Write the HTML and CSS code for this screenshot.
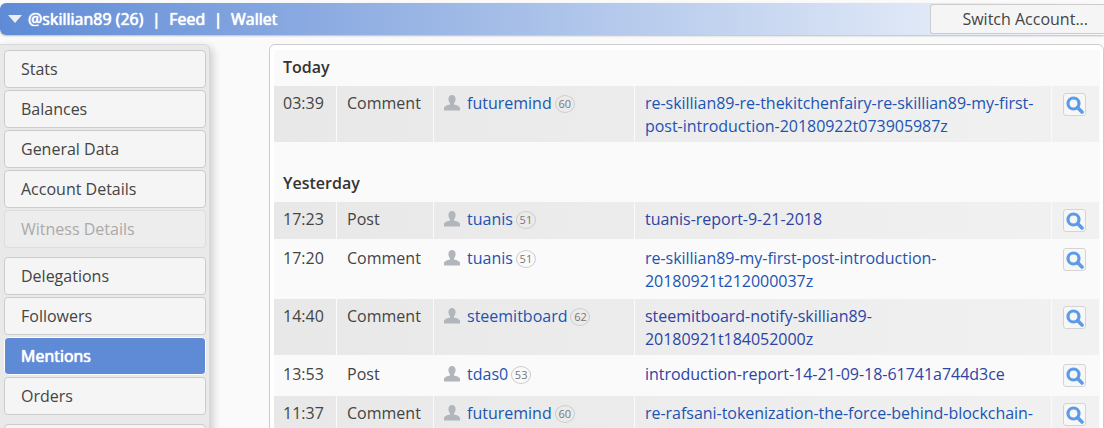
FILE: index.html
```html
<!DOCTYPE html>
<html lang="en">

<head>
    <meta charset="UTF-8">
    <title>Mentions</title>
    <link rel="stylesheet" href="styles.css">
</head>

<body>
    <svg class="icon-defs" width="0" height="0">
        <symbol id="user" viewBox="0 0 16 16">
            <path d="M8 0C5.600 0 4.400 1.800 4.400 4.100 4.400 6 5.200 7.500 6 8.300V9.600C3.500 10.300 0.200 11 0 13V15.500H16V13C15.800 11 12.500 10.300 10 9.600V8.300C10.800 7.500 11.600 6 11.600 4.100 11.600 1.800 10.400 0 8 0Z" />
        </symbol>
        <symbol id="search" viewBox="0 0 18 18">
            <circle cx="7.500" cy="7.500" r="5.500" fill="none" stroke="currentColor" stroke-width="3.200" />
            <path d="M11.500 11.500L16 16" fill="none" stroke="currentColor" stroke-width="3.600" stroke-linecap="round" />
        </symbol>
    </svg>

    <div class="top-bar">
        <div class="account-nav">
            <span class="arrow"></span>
            <span>@skillian89 (26)</span>
            <span class="sep">|</span>
            <span>Feed</span>
            <span class="sep">|</span>
            <span>Wallet</span>
        </div>
        <button class="switch-btn">Switch Account...</button>
    </div>

    <div class="content">
        <div class="side-menu">
            <div class="menu-group">
                <div class="menu-item">Stats</div>
                <div class="menu-item">Balances</div>
                <div class="menu-item">General Data</div>
                <div class="menu-item">Account Details</div>
                <div class="menu-item disabled">Witness Details</div>
            </div>
            <div class="menu-group">
                <div class="menu-item">Delegations</div>
                <div class="menu-item">Followers</div>
                <div class="menu-item active">Mentions</div>
                <div class="menu-item">Orders</div>
            </div>
            <div class="menu-group">
                <div class="menu-item"></div>
            </div>
        </div>

        <div class="main-panel">
            <div class="panel-body">
                <h3 class="day-title">Today</h3>
                <table class="feed">
                    <tr class="odd">
                        <td class="time">03:39</td>
                        <td class="kind">Comment</td>
                        <td class="who"><svg class="avatar"><use href="#user" /></svg><a href="#">futuremind</a><span class="rep">60</span></td>
                        <td class="link"><a href="#">re-skillian89-re-thekitchenfairy-re-skillian89-my-first-post-introduction-20180922t073905987z</a></td>
                        <td class="view"><span class="view-btn"><svg><use href="#search" /></svg></span></td>
                    </tr>
                </table>

                <h3 class="day-title second">Yesterday</h3>
                <table class="feed">
                    <tr class="odd">
                        <td class="time">17:23</td>
                        <td class="kind">Post</td>
                        <td class="who"><svg class="avatar"><use href="#user" /></svg><a href="#">tuanis</a><span class="rep">51</span></td>
                        <td class="link"><a class="seen" href="#">tuanis-report-9-21-2018</a></td>
                        <td class="view"><span class="view-btn"><svg><use href="#search" /></svg></span></td>
                    </tr>
                    <tr>
                        <td class="time">17:20</td>
                        <td class="kind">Comment</td>
                        <td class="who"><svg class="avatar"><use href="#user" /></svg><a href="#">tuanis</a><span class="rep">51</span></td>
                        <td class="link"><a href="#">re-skillian89-my-first-post-introduction-20180921t212000037z</a></td>
                        <td class="view"><span class="view-btn"><svg><use href="#search" /></svg></span></td>
                    </tr>
                    <tr class="odd">
                        <td class="time">14:40</td>
                        <td class="kind">Comment</td>
                        <td class="who"><svg class="avatar"><use href="#user" /></svg><a href="#">steemitboard</a><span class="rep">62</span></td>
                        <td class="link"><a class="seen" href="#">steemitboard-notify-skillian89-20180921t184052000z</a></td>
                        <td class="view"><span class="view-btn"><svg><use href="#search" /></svg></span></td>
                    </tr>
                    <tr>
                        <td class="time">13:53</td>
                        <td class="kind">Post</td>
                        <td class="who"><svg class="avatar"><use href="#user" /></svg><a href="#">tdas0</a><span class="rep">53</span></td>
                        <td class="link"><a class="seen" href="#">introduction-report-14-21-09-18-61741a744d3ce</a></td>
                        <td class="view"><span class="view-btn"><svg><use href="#search" /></svg></span></td>
                    </tr>
                    <tr class="odd">
                        <td class="time">11:37</td>
                        <td class="kind">Comment</td>
                        <td class="who"><svg class="avatar"><use href="#user" /></svg><a href="#">futuremind</a><span class="rep">60</span></td>
                        <td class="link"><a href="#">re-rafsani-tokenization-the-force-behind-blockchain-</a></td>
                        <td class="view"><span class="view-btn"><svg><use href="#search" /></svg></span></td>
                    </tr>
                </table>
            </div>
        </div>
    </div>
</body>

</html>
```

FILE: styles.css
```css
html, body {
    height: 100%;
}

body {
    font-family: 'Open Sans', sans-serif;
    font-size: 16px;
    line-height: 23px;
    color: #444;
    background-color: #fafafa;
    margin: 0;
    padding: 3px 0 0 0;
    box-sizing: border-box;
    overflow: hidden;
}

.icon-defs {
    display: block;
    height: 0;
}

a {
    color: #1c54b2;
    text-decoration: none;
}

a.seen {
    color: #2c44a4;
}

.top-bar {
    display: flex;
    justify-content: space-between;
    align-items: center;
    height: 32px;
    border-radius: 6px 0 0 6px;
    background: linear-gradient(to right, #5f8bd6, #f8fafd);
    box-shadow: 0 1px 2px rgba(0, 0, 0, 0.25);
}

.account-nav {
    display: flex;
    align-items: center;
    gap: 6px;
    padding-left: 8px;
    color: white;
    text-shadow: 0 0 1px #fff, 0 0 1px #fff;
}

.arrow {
    width: 0;
    height: 0;
    border-left: 7px solid transparent;
    border-right: 7px solid transparent;
    border-top: 8px solid #eee;
}

.sep {
    margin: 0 2.5px;
}

.switch-btn {
    width: 174px;
    height: 30px;
    font-family: inherit;
    font-size: 16px;
    color: #444;
    text-align: right;
    padding: 0 16px 0 0;
    background-color: #f5f5f5;
    border: 1px solid #ccc;
    border-right: none;
    border-radius: 3px 0 0 3px;
}

.content {
    display: flex;
    align-items: flex-start;
    margin-top: 9px;
}

.side-menu {
    width: 210px;
    flex-shrink: 0;
    box-sizing: border-box;
    padding: 5px 3px 5px 4px;
    background-color: #e9e9e9;
    border-radius: 0 6px 0 0;
    border: 1px solid #d8d8d8;
    border-left: none;
    box-shadow: 3px 3px 8px rgba(0, 0, 0, 0.18);
}

.menu-group {
    display: flex;
    flex-direction: column;
    gap: 2px;
    margin-bottom: 9px;
}

.menu-item {
    height: 38px;
    box-sizing: border-box;
    padding: 7px 16px;
    background-color: #f5f5f5;
    border: 1px solid #ccc;
    border-radius: 4px;
}

.menu-item.disabled {
    color: #aaa;
    background-color: #ededed;
    border-color: #ddd;
}

.menu-item.active {
    color: white;
    text-shadow: 0 0 1px #fff, 0 0 1px #fff;
    background-color: #5f8bd6;
    border-color: white;
}

.main-panel {
    flex: 1;
    margin-left: 59px;
    padding: 5px 3px 0 4px;
    background-color: white;
    border: 1px solid #ccc;
    border-radius: 6px 6px 0 0;
}

.panel-body {
    background-color: #fafafa;
}

.day-title {
    margin: 0;
    height: 36px;
    padding: 6px 0 0 9px;
    box-sizing: border-box;
    font-size: 16px;
    font-weight: 600;
    color: #333;
}

.day-title.second {
    margin-top: 22px;
}

.feed {
    width: 825px;
    table-layout: fixed;
    border-collapse: separate;
    border-spacing: 0;
}

.feed tr {
    background-color: #fafafa;
}

.feed tr.odd {
    background: linear-gradient(to right, #e8e8e8, #f1f1f1);
}

.feed td {
    padding: 6px 10px 4px;
    vertical-align: top;
    border-right: 1px solid #fafafa;
    border-bottom: 2px solid #fafafa;
}

.feed td.time {
    width: 43px;
    padding-left: 9px;
}

.kind {
    width: 76px;
}

.who {
    width: 180px;
    white-space: nowrap;
}

.feed td.link {
    width: 392px;
    padding-right: 14px;
    letter-spacing: -0.03px;
}

.feed td.view {
    width: 47px;
    padding: 7px 0 7px 11px;
    box-sizing: border-box;
    border-right: none;
}

.avatar {
    width: 16px;
    height: 16px;
    margin-right: 7px;
    vertical-align: -2px;
    fill: #b0b6bc;
}

.rep {
    display: inline-block;
    width: 20px;
    height: 18px;
    margin-left: 3px;
    box-sizing: border-box;
    border: 1px solid #ccc;
    border-radius: 50%;
    font-size: 11px;
    line-height: 16px;
    text-align: center;
    color: #777;
    vertical-align: 1px;
}

.view-btn {
    display: flex;
    align-items: center;
    justify-content: center;
    width: 23px;
    height: 23px;
    box-sizing: border-box;
    background-color: #f7f7f7;
    border: 1px solid #d4d4d4;
    border-radius: 3px;
    color: #5b9be8;
}

.view-btn svg {
    width: 18px;
    height: 18px;
}
```
